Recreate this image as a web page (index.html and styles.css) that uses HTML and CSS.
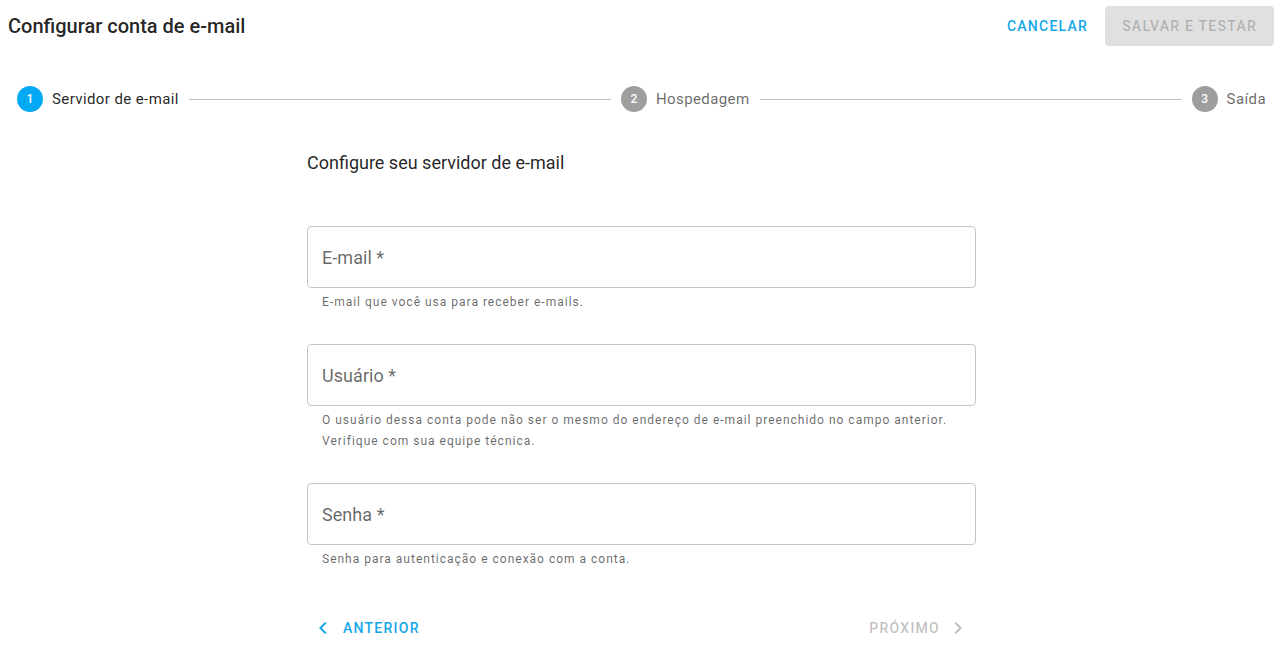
FILE: index.html
```html
<!DOCTYPE html>
<html lang="pt-BR">
<head>
<meta charset="utf-8">
<title>Configurar conta de e-mail</title>
<link rel="stylesheet" href="styles.css">
</head>
<body>
<header class="topbar">
  <h1 class="title">Configurar conta de e-mail</h1>
  <div class="actions">
    <button class="btn-text">Cancelar</button>
    <button class="btn-flat" disabled>Salvar e testar</button>
  </div>
</header>

<nav class="stepper">
  <div class="step active">
    <span class="step-num">1</span>
    <span class="step-label">Servidor de e-mail</span>
  </div>
  <div class="step-line"></div>
  <div class="step">
    <span class="step-num">2</span>
    <span class="step-label">Hospedagem</span>
  </div>
  <div class="step-line"></div>
  <div class="step">
    <span class="step-num">3</span>
    <span class="step-label">Saída</span>
  </div>
</nav>

<main class="form">
  <h2 class="form-title">Configure seu servidor de e-mail</h2>

  <div class="field">
    <div class="field-box"><span class="field-label">E-mail *</span></div>
    <div class="field-hint">E-mail que você usa para receber e-mails.</div>
  </div>

  <div class="field">
    <div class="field-box"><span class="field-label">Usuário *</span></div>
    <div class="field-hint">O usuário dessa conta pode não ser o mesmo do endereço de e-mail preenchido no campo anterior.<br>Verifique com sua equipe técnica.</div>
  </div>

  <div class="field">
    <div class="field-box"><span class="field-label">Senha *</span></div>
    <div class="field-hint">Senha para autenticação e conexão com a conta.</div>
  </div>

  <div class="nav-buttons">
    <button class="btn-nav prev">
      <svg class="chev" viewBox="0 0 24 24" width="24" height="24"><path d="M15.41 7.41L14 6l-6 6 6 6 1.41-1.41L10.83 12z"/></svg>
      <span>Anterior</span>
    </button>
    <button class="btn-nav next" disabled>
      <span>Próximo</span>
      <svg class="chev" viewBox="0 0 24 24" width="24" height="24"><path d="M10 6L8.59 7.41 13.17 12l-4.58 4.59L10 18l6-6z"/></svg>
    </button>
  </div>
</main>
</body>
</html>
```

FILE: styles.css
```css
* { box-sizing: border-box; }

html, body {
  margin: 0;
  padding: 0;
  background: #ffffff;
  font-family: Roboto, "Liberation Sans", Arial, sans-serif;
  color: rgba(0, 0, 0, 0.87);
}

button {
  font-family: inherit;
  border: none;
  background: none;
  cursor: pointer;
}

.topbar {
  display: flex;
  align-items: center;
  justify-content: space-between;
  padding: 6px 10px 0 8px;
  height: 46px;
}

.title {
  margin: 0;
  font-size: 20px;
  font-weight: 500;
  color: rgba(0, 0, 0, 0.87);
  letter-spacing: 0;
}

.actions {
  display: flex;
  align-items: center;
  gap: 9px;
}

.btn-text {
  height: 36px;
  padding: 0 8px;
  font-size: 14px;
  font-weight: 500;
  letter-spacing: 1.25px;
  text-transform: uppercase;
  color: #14a7ea;
}

.btn-flat {
  height: 40px;
  padding: 0 17px;
  border-radius: 4px;
  background: #e0e0e0;
  font-size: 14px;
  font-weight: 500;
  letter-spacing: 1.25px;
  text-transform: uppercase;
  color: rgba(0, 0, 0, 0.22);
  cursor: default;
}

.stepper {
  display: flex;
  align-items: center;
  margin-top: 41px;
  padding: 0 18px 0 17px;
  height: 24px;
}

.step {
  display: flex;
  align-items: center;
  gap: 9px;
  flex: none;
}

.step-num {
  width: 26px;
  height: 26px;
  border-radius: 50%;
  background: #9e9e9e;
  color: #ffffff;
  font-size: 12px;
  font-weight: 500;
  display: flex;
  align-items: center;
  justify-content: center;
}

.step.active .step-num {
  background: #03a9f4;
}

.step-label {
  font-size: 15px;
  color: rgba(0, 0, 0, 0.6);
  letter-spacing: 0.4px;
}

.step.active .step-label {
  color: rgba(0, 0, 0, 0.87);
}

.step-line {
  flex: 1;
  height: 1px;
  background: #bdbdbd;
  margin: 0 10px;
}

.form {
  width: 670px;
  padding-right: 1px;
  margin: 0 auto;
}

.form-title {
  margin: 40px 0 0;
  font-size: 18px;
  font-weight: 400;
  line-height: 24px;
  color: rgba(0, 0, 0, 0.87);
}

.field {
  margin-top: 51px;
}

.field + .field {
  margin-top: 31px;
}

.field-box {
  height: 62px;
  border: 1px solid #c6c6c6;
  border-radius: 4px;
  padding: 0 14px;
  display: flex;
  align-items: center;
}

.field-label {
  font-size: 18px;
  color: rgba(0, 0, 0, 0.6);
  letter-spacing: 0.05px;
}

.field-hint {
  margin-top: 4px;
  padding-left: 15px;
  font-size: 12px;
  line-height: 21px;
  letter-spacing: 1px;
  color: rgba(0, 0, 0, 0.6);
}

.nav-buttons {
  margin-top: 40px;
  display: flex;
  justify-content: space-between;
  align-items: center;
}

.btn-nav {
  height: 36px;
  display: flex;
  align-items: center;
  gap: 8px;
  font-size: 14px;
  font-weight: 500;
  letter-spacing: 1.25px;
  text-transform: uppercase;
  color: #14a7ea;
}

.btn-nav.prev {
  padding: 0 8px 0 4px;
}

.btn-nav.next {
  padding: 0 6px 0 8px;
  gap: 6px;
  color: rgba(0, 0, 0, 0.26);
  cursor: default;
}

.chev {
  fill: currentColor;
  flex: none;
}
```
